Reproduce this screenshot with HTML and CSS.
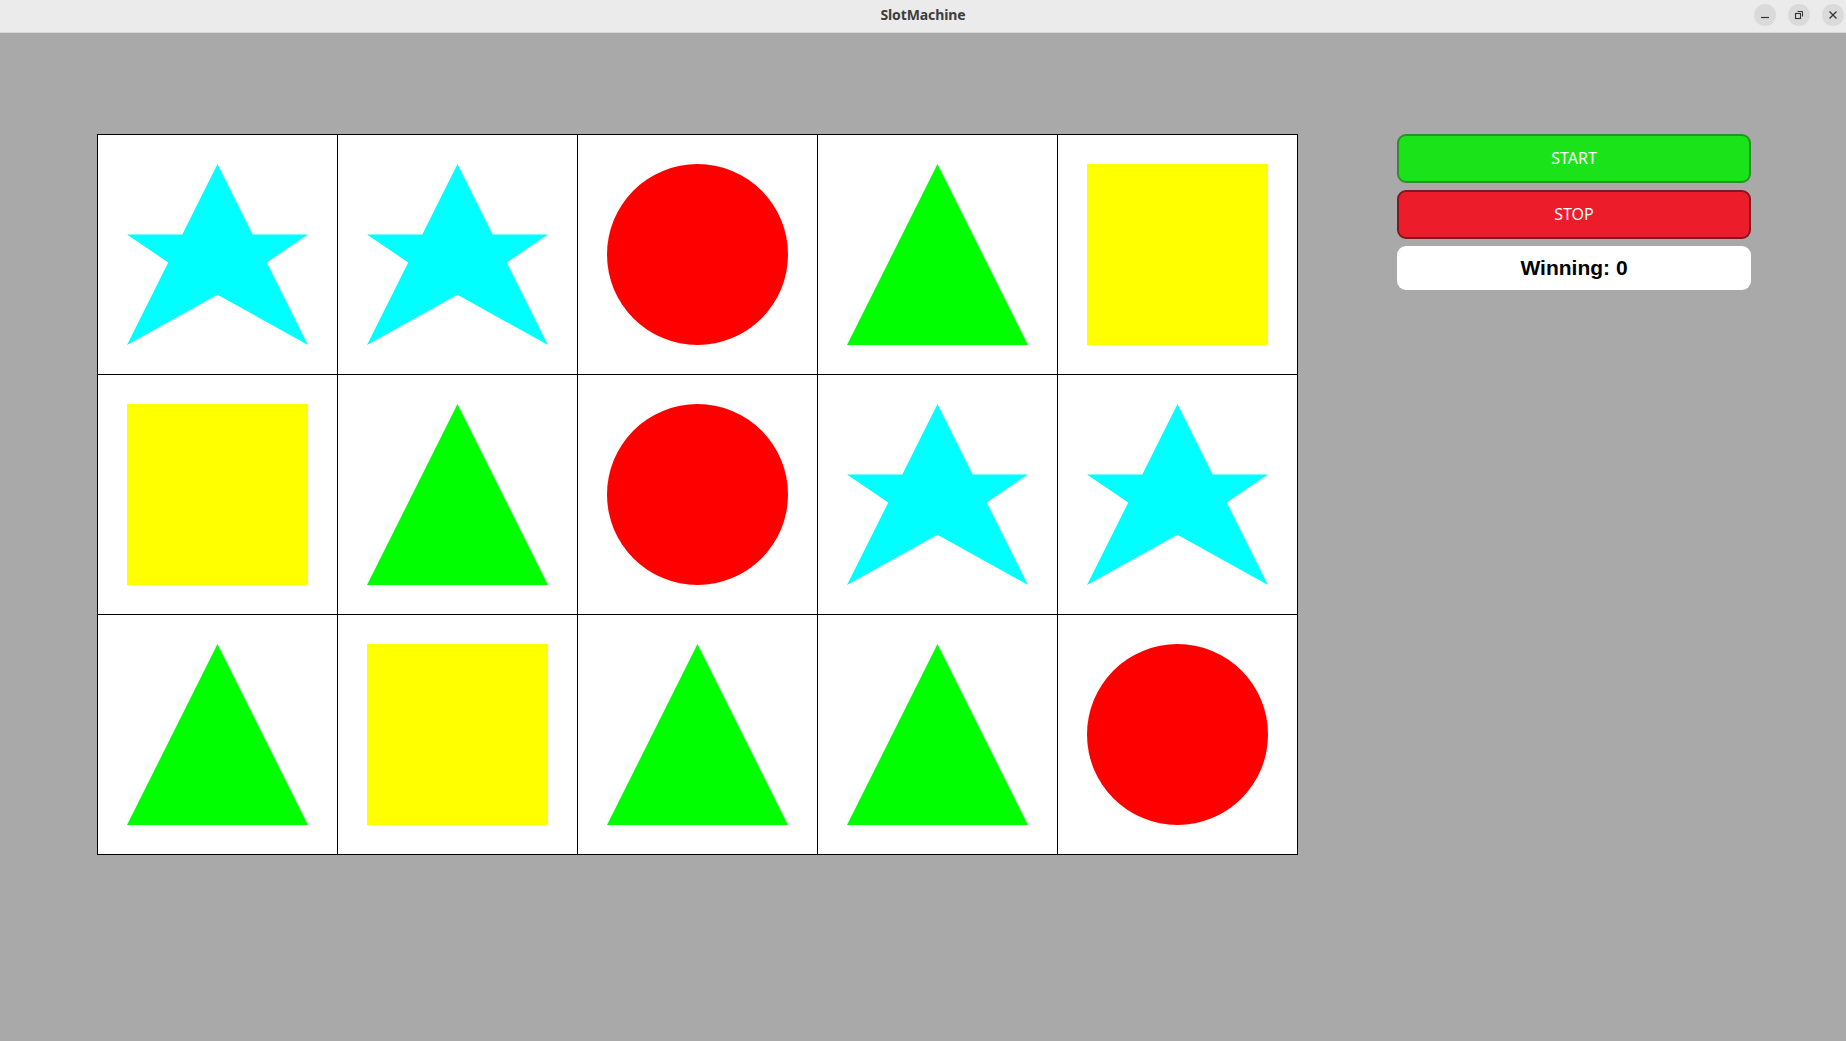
FILE: index.html
```
<!DOCTYPE html>
<html>
<head>
<meta charset="utf-8">
<title>SlotMachine</title>
<link rel="stylesheet" href="styles.css">
</head>
<body>
<svg class="defs" width="0" height="0">
  <defs>
    <polygon id="star" points="90,0 125,70 180,70 139,98 180,180 90,130 0,180 41,98 0,70 55,70" fill="#00ffff"/>
    <circle id="circle" cx="90" cy="90" r="90" fill="#ff0000"/>
    <polygon id="triangle" points="90,0 180,180 0,180" fill="#00ff00"/>
    <rect id="square" x="0" y="0" width="180" height="180" fill="#ffff00"/>
  </defs>
</svg>
<header class="titlebar">
  <div class="title">SlotMachine</div>
  <div class="controls">
    <span class="ctl"><svg width="10" height="10" viewBox="0 0 10 10"><line x1="1" y1="7.5" x2="9" y2="7.5" stroke="#333" stroke-width="1.2"/></svg></span>
    <span class="ctl"><svg width="10" height="10" viewBox="0 0 10 10"><rect x="1.5" y="3.5" width="5" height="5" fill="none" stroke="#333" stroke-width="1.1"/><polyline points="3.5,1.5 8.5,1.5 8.5,6.5" fill="none" stroke="#333" stroke-width="1"/></svg></span>
    <span class="ctl"><svg width="10" height="10" viewBox="0 0 10 10"><line x1="1.5" y1="1.5" x2="8.5" y2="8.5" stroke="#333" stroke-width="1.3"/><line x1="8.5" y1="1.5" x2="1.5" y2="8.5" stroke="#333" stroke-width="1.3"/></svg></span>
  </div>
</header>
<main class="app">
  <div class="reels">
    <div class="cell"><svg viewBox="0 0 180 180"><use href="#star"/></svg></div>
    <div class="cell"><svg viewBox="0 0 180 180"><use href="#star"/></svg></div>
    <div class="cell"><svg viewBox="0 0 180 180"><use href="#circle"/></svg></div>
    <div class="cell"><svg viewBox="0 0 180 180"><use href="#triangle"/></svg></div>
    <div class="cell"><svg viewBox="0 0 180 180"><use href="#square"/></svg></div>
    <div class="cell"><svg viewBox="0 0 180 180"><use href="#square"/></svg></div>
    <div class="cell"><svg viewBox="0 0 180 180"><use href="#triangle"/></svg></div>
    <div class="cell"><svg viewBox="0 0 180 180"><use href="#circle"/></svg></div>
    <div class="cell"><svg viewBox="0 0 180 180"><use href="#star"/></svg></div>
    <div class="cell"><svg viewBox="0 0 180 180"><use href="#star"/></svg></div>
    <div class="cell"><svg viewBox="0 0 180 180"><use href="#triangle"/></svg></div>
    <div class="cell"><svg viewBox="0 0 180 180"><use href="#square"/></svg></div>
    <div class="cell"><svg viewBox="0 0 180 180"><use href="#triangle"/></svg></div>
    <div class="cell"><svg viewBox="0 0 180 180"><use href="#triangle"/></svg></div>
    <div class="cell"><svg viewBox="0 0 180 180"><use href="#circle"/></svg></div>
  </div>
  <div class="panel">
    <button class="btn btn-start">START</button>
    <button class="btn btn-stop">STOP</button>
    <div class="winning">Winning: 0</div>
  </div>
</main>
</body>
</html>
```
FILE: styles.css
```
html, body {
  margin: 0;
  padding: 0;
  height: 100%;
}
body {
  background: #a9a9a9;
  font-family: "Noto Sans", "DejaVu Sans", sans-serif;
  overflow: hidden;
}
.defs {
  position: absolute;
  width: 0;
  height: 0;
}
.titlebar {
  height: 33px;
  background: #ebebeb;
  display: flex;
  align-items: center;
  justify-content: center;
  position: relative;
  box-sizing: border-box;
  border-bottom: 1px solid #d8d8d8;
}
.title {
  font-size: 14px;
  font-weight: 700;
  color: #3d3d3d;
  letter-spacing: -0.1px;
  margin-top: -3px;
}
.controls {
  position: absolute;
  right: 2px;
  top: 4px;
  display: flex;
  gap: 12px;
}
.ctl {
  width: 22px;
  height: 22px;
  border-radius: 50%;
  background: #dadada;
  display: flex;
  align-items: center;
  justify-content: center;
}
.app {
  display: flex;
  align-items: flex-start;
  padding: 101px 0 0 97px;
}
.reels {
  display: grid;
  grid-template-columns: repeat(5, 240px);
  grid-auto-rows: 240px;
  border-left: 1px solid #000;
  border-top: 1px solid #000;
  background: #fff;
}
.cell {
  box-sizing: border-box;
  border-right: 1px solid #000;
  border-bottom: 1px solid #000;
  padding: 29px 0 0 29px;
}
.cell svg {
  display: block;
  width: 181px;
  height: 181px;
}
.panel {
  margin-left: 99px;
  width: 354px;
  display: flex;
  flex-direction: column;
  gap: 7px;
}
.btn {
  height: 49px;
  box-sizing: border-box;
  border-radius: 9px;
  font-family: "Noto Sans", sans-serif;
  font-size: 16px;
  color: #fff;
  padding: 0 0 2px 0;
  margin: 0;
}
.btn-start {
  background: #1ae31a;
  border: 2px solid #2c8f2c;
}
.btn-stop {
  background: #ed1c2a;
  border: 2px solid #7d1a1f;
}
.winning {
  height: 44px;
  background: #fff;
  border-radius: 9px;
  display: flex;
  align-items: center;
  justify-content: center;
  font-family: "Liberation Sans", Arial, sans-serif;
  font-weight: 700;
  font-size: 21px;
  color: #000;
}
```
